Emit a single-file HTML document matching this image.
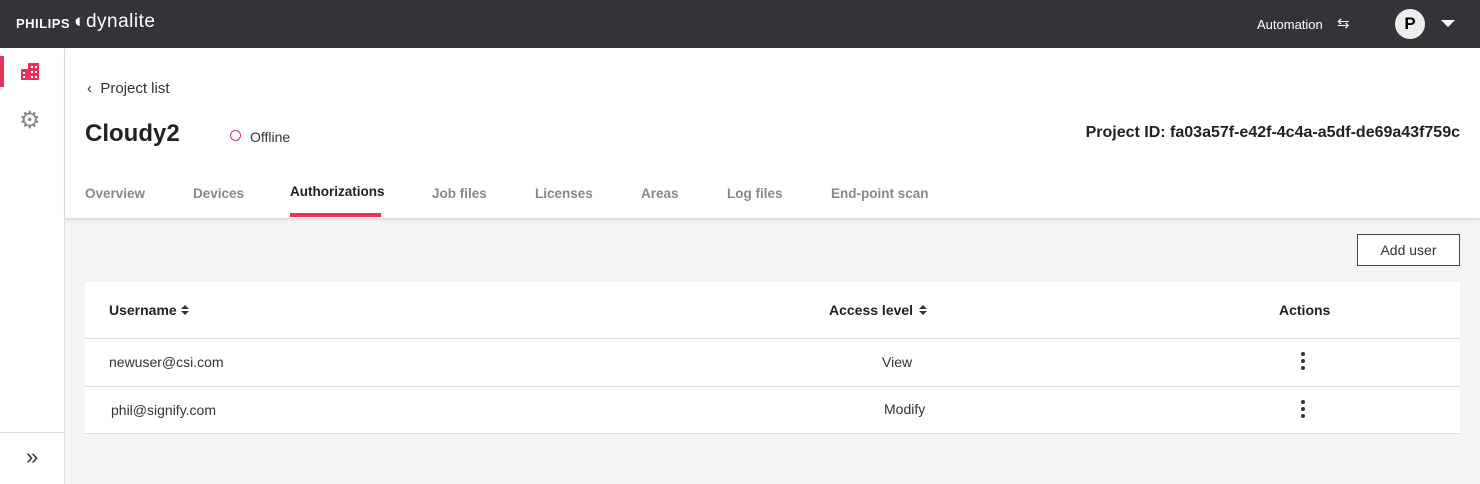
<!DOCTYPE html>
<html><head><style>
body{margin:0;width:1480px;height:484px;overflow:hidden;font-family:"Liberation Sans",sans-serif;background:#f4f4f4;position:relative}
.top{position:absolute;left:0;top:0;width:1480px;height:48px;background:#333438;color:#fff}
.side{position:absolute;left:0;top:48px;width:64px;height:436px;background:#fff;border-right:1px solid #ddd}
.head{position:absolute;left:65px;top:48px;width:1415px;height:170px;background:#fff;border-bottom:1px solid #ddd;box-shadow:0 1px 2px rgba(0,0,0,.1)}
.a{position:absolute;white-space:nowrap}
.tab{position:absolute;font-size:13.5px;color:#888;font-weight:bold}
.card{position:absolute;left:85px;top:282px;width:1375px;height:152px;background:#fff}
.row{position:absolute;left:0;width:1375px;border-top:1px solid #ddd}
.dots{position:absolute;width:4px;font-size:0}
.dots i{display:block;width:4px;height:4px;border-radius:50%;background:#333;margin:0 0 3px}
</style></head><body>
<div class="top">
 <div class="a" style="left:16px;top:16px;font-size:13px;font-weight:bold;letter-spacing:.5px">PHILIPS</div>
 <div class="a" style="left:74px;top:11px;font-size:19px;letter-spacing:.5px">◐dynalite</div>
 <div class="a" style="left:1257px;top:17px;font-size:13px">Automation</div>
 <div class="a" style="left:1337px;top:14px;font-size:15px">⇆</div>
 <div class="a" style="left:1395px;top:9px;width:30px;height:30px;border-radius:50%;background:#eee;color:#000;font-weight:bold;font-size:17px;text-align:center;line-height:30px">P</div>
 <div class="a" style="left:1441px;top:20px;width:0;height:0;border-left:7px solid transparent;border-right:7px solid transparent;border-top:7px solid #fff"></div>
</div>
<div class="side">
 <div class="a" style="left:0;top:8px;width:4px;height:31px;background:#e8315b"></div>
 <svg class="a" style="left:21px;top:15px" width="18" height="17"><path d="M7 0h11v17H7zM0 6h7v11H0z" fill="#e8315b"/><g fill="#fff"><rect x="10" y="3" width="2" height="2"/><rect x="14" y="3" width="2" height="2"/><rect x="10" y="8" width="2" height="2"/><rect x="14" y="8" width="2" height="2"/><rect x="2" y="9" width="2" height="2"/><rect x="2" y="13" width="2" height="2"/><rect x="10" y="13" width="2" height="2"/><rect x="14" y="13" width="2" height="2"/></g></svg>
 <div class="a" style="left:19px;top:58px;font-size:24px;color:#888">⚙</div>
 <div class="a" style="left:0;top:384px;width:64px;border-top:1px solid #ddd"></div>
 <div class="a" style="left:26px;top:396px;font-size:22px;color:#333">»</div>
</div>
<div class="head">
 <div class="a" style="left:22px;top:32px;font-size:15px;color:#333">‹&nbsp;&nbsp;Project list</div>
 <div class="a" style="left:20px;top:72px;font-size:24px;font-weight:bold;color:#222">Cloudy2</div>
 <div class="a" style="left:165px;top:82px;width:9px;height:9px;border:1.5px solid #e8315b;border-radius:50%"></div>
 <div class="a" style="left:185px;top:81px;font-size:14px;color:#333">Offline</div>
 <div class="a" style="right:20px;top:76px;font-size:16px;font-weight:bold;color:#222">Project ID: fa03a57f-e42f-4c4a-a5df-de69a43f759c</div>
</div>
<div class="tab" style="left:85px;top:186px">Overview</div>
<div class="tab" style="left:193px;top:186px">Devices</div>
<div class="tab" style="left:290px;top:184px;color:#222">Authorizations</div>
<div class="a" style="left:290px;top:213px;width:91px;height:4px;background:#e8315b"></div>
<div class="tab" style="left:432px;top:186px">Job files</div>
<div class="tab" style="left:535px;top:186px">Licenses</div>
<div class="tab" style="left:641px;top:186px">Areas</div>
<div class="tab" style="left:727px;top:186px">Log files</div>
<div class="tab" style="left:831px;top:186px">End-point scan</div>
<div class="a" style="left:1357px;top:234px;border:1px solid #444;background:#fff;font-size:14px;color:#333;text-align:center;line-height:30px;box-sizing:border-box;width:103px;height:32px">Add user</div>
<div class="card">
 <div class="a" style="left:24px;top:20px;font-size:14px;font-weight:bold;color:#222">Username</div>
 <svg class="a" style="left:96px;top:22px" width="8" height="12"><path d="M0 5L4 1L8 5ZM0 7L4 11L8 7Z" fill="#333"/></svg>
 <div class="a" style="left:744px;top:20px;font-size:14px;font-weight:bold;color:#222">Access level</div>
 <svg class="a" style="left:834px;top:22px" width="8" height="12"><path d="M0 5L4 1L8 5ZM0 7L4 11L8 7Z" fill="#333"/></svg>
 <div class="a" style="left:1194px;top:20px;font-size:14px;font-weight:bold;color:#222">Actions</div>
 <div class="row" style="top:56px"></div>
 <div class="a" style="left:24px;top:72px;font-size:14px;color:#333">newuser@csi.com</div>
 <div class="a" style="left:797px;top:72px;font-size:14px;color:#333">View</div>
 <div class="dots" style="left:1216px;top:70px"><i></i><i></i><i></i></div>
 <div class="row" style="top:104px"></div>
 <div class="a" style="left:26px;top:120px;font-size:14px;color:#333">phil@signify.com</div>
 <div class="a" style="left:799px;top:119px;font-size:14px;color:#333">Modify</div>
 <div class="dots" style="left:1216px;top:118px"><i></i><i></i><i></i></div>
 <div class="row" style="top:151px"></div>
</div>
</body></html>
